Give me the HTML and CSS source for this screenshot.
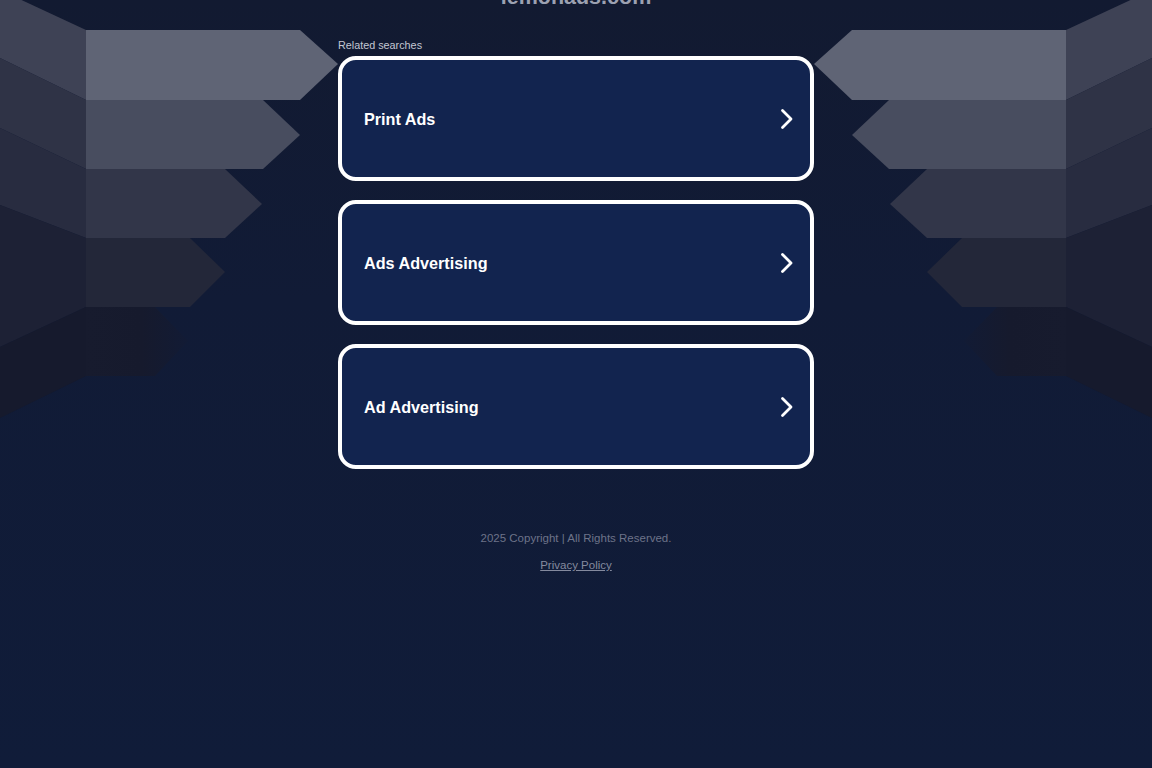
FILE: index.html
```html
<!DOCTYPE html>
<html lang="en">
<head>
<meta charset="utf-8">
<title>lemonads.com</title>
<link rel="stylesheet" href="styles.css">
</head>
<body>
<div class="page">
  <div class="deco deco-left">
    <svg class="deco-svg" width="338" height="430" viewBox="0 0 338 430">
      <defs>
        <linearGradient id="fadeL" x1="0" y1="0" x2="1" y2="0">
          <stop offset="0" stop-color="#171b2e"/>
          <stop offset="0.55" stop-color="#161a2d"/>
          <stop offset="1" stop-color="#121b35"/>
        </linearGradient>
      </defs>
      <polygon points="0,-10 86,30 86,100 0,58" fill="#3e4255"/>
      <polygon points="0,58 86,100 86,169 0,128" fill="#2f3346"/>
      <polygon points="0,128 86,169 86,238 0,205" fill="#282c40"/>
      <polygon points="0,205 86,238 86,307 0,347" fill="#1d2135"/>
      <polygon points="0,347 86,307 86,376 0,418" fill="#161a2d"/>
      <polygon points="86,30 300,30 338,64 300,100 86,100" fill="#5f6475"/>
      <polygon points="86,100 263,100 300,135 263,169 86,169" fill="#484d5f"/>
      <polygon points="86,169 225,169 262,204 225,238 86,238" fill="#323649"/>
      <polygon points="86,238 190,238 225,272 190,307 86,307" fill="#232739"/>
      <polygon points="86,307 155,307 188,341 155,376 86,376" fill="url(#fadeL)"/>
    </svg>
  </div>
  <main class="main">
    <h1 class="domain">lemonads.com</h1>
    <p class="related">Related searches</p>
    <div class="cards">
      <a class="card" href="#">
        <span class="card-label">Print Ads</span>
        <svg class="chev" width="14" height="22" viewBox="0 0 14 22"><polyline points="2.5,2.5 11,11 2.5,19.5" fill="none" stroke="#ffffff" stroke-width="2.8" stroke-linecap="round" stroke-linejoin="round"/></svg>
      </a>
      <a class="card" href="#">
        <span class="card-label">Ads Advertising</span>
        <svg class="chev" width="14" height="22" viewBox="0 0 14 22"><polyline points="2.5,2.5 11,11 2.5,19.5" fill="none" stroke="#ffffff" stroke-width="2.8" stroke-linecap="round" stroke-linejoin="round"/></svg>
      </a>
      <a class="card" href="#">
        <span class="card-label">Ad Advertising</span>
        <svg class="chev" width="14" height="22" viewBox="0 0 14 22"><polyline points="2.5,2.5 11,11 2.5,19.5" fill="none" stroke="#ffffff" stroke-width="2.8" stroke-linecap="round" stroke-linejoin="round"/></svg>
      </a>
    </div>
    <footer class="footer">
      <p class="copyright">2025 Copyright | All Rights Reserved.</p>
      <p class="privacy"><a href="#">Privacy Policy</a></p>
    </footer>
  </main>
  <div class="deco deco-right">
    <svg class="deco-svg" width="338" height="430" viewBox="0 0 338 430">
      <defs>
        <linearGradient id="fadeR" x1="0" y1="0" x2="1" y2="0">
          <stop offset="0" stop-color="#171b2e"/>
          <stop offset="0.55" stop-color="#161a2d"/>
          <stop offset="1" stop-color="#121b35"/>
        </linearGradient>
      </defs>
      <polygon points="0,-10 86,30 86,100 0,58" fill="#3e4255"/>
      <polygon points="0,58 86,100 86,169 0,128" fill="#2f3346"/>
      <polygon points="0,128 86,169 86,238 0,205" fill="#282c40"/>
      <polygon points="0,205 86,238 86,307 0,347" fill="#1d2135"/>
      <polygon points="0,347 86,307 86,376 0,418" fill="#161a2d"/>
      <polygon points="86,30 300,30 338,64 300,100 86,100" fill="#5f6475"/>
      <polygon points="86,100 263,100 300,135 263,169 86,169" fill="#484d5f"/>
      <polygon points="86,169 225,169 262,204 225,238 86,238" fill="#323649"/>
      <polygon points="86,238 190,238 225,272 190,307 86,307" fill="#232739"/>
      <polygon points="86,307 155,307 188,341 155,376 86,376" fill="url(#fadeR)"/>
    </svg>
  </div>
</div>
</body>
</html>
```

FILE: styles.css
```css
html, body {
  margin: 0;
  padding: 0;
}

body {
  min-height: 768px;
  background: linear-gradient(to bottom, #121a31 0px, #111b36 300px, #101c39 768px);
  font-family: "Liberation Sans", Arial, sans-serif;
  overflow: hidden;
}

.page {
  display: flex;
  align-items: flex-start;
  width: 1152px;
  min-height: 768px;
}

.deco {
  flex: 0 0 338px;
  height: 430px;
}

.deco-svg {
  display: block;
}

.deco-right .deco-svg {
  transform: scaleX(-1);
}

.main {
  flex: 0 0 476px;
  display: flex;
  flex-direction: column;
}

.domain {
  margin: -15px 0 0;
  font-size: 21.5px;
  line-height: 24px;
  font-weight: bold;
  color: #9ca1b1;
  text-align: center;
}

.related {
  margin: 29.5px 0 5.5px;
  font-size: 10.8px;
  line-height: 12px;
  color: #c3c7d2;
}

.cards {
  display: flex;
  flex-direction: column;
  gap: 19px;
}

.card {
  box-sizing: border-box;
  height: 125px;
  display: flex;
  align-items: center;
  justify-content: space-between;
  padding: 0 16px 0 22px;
  border: 4px solid #ffffff;
  border-radius: 18px;
  background: #12244f;
  text-decoration: none;
}

.card-label {
  font-size: 16.2px;
  font-weight: bold;
  color: #ffffff;
  line-height: 20px;
}

.chev {
  display: block;
  flex: 0 0 auto;
}

.footer {
  margin-top: 62px;
  text-align: center;
}

.copyright {
  margin: 0;
  font-size: 11.5px;
  line-height: 14px;
  color: #6d7389;
}

.privacy {
  margin: 13px 0 0;
  font-size: 11.5px;
  line-height: 14px;
}

.privacy a {
  color: #848a9e;
  text-decoration: underline;
}
```
